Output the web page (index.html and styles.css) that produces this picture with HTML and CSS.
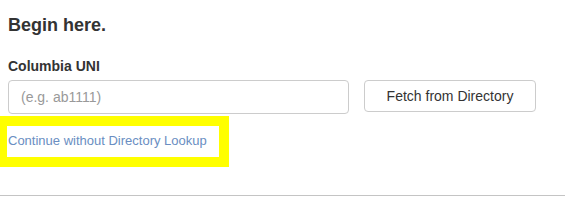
FILE: index.html
```html
<!DOCTYPE html>
<html lang="en">
  <head>
    <meta charset="UTF-8" />
    <meta name="viewport" content="width=device-width, initial-scale=1.0" />
    <title>Begin here</title>
    <link rel="stylesheet" href="styles.css">
  </head>
  <body>
    <div class="panel">
      <h3 class="title">Begin here.</h3>

      <label class="field-label" for="uni">Columbia UNI</label>
      <div class="lookup-row">
        <input type="text" id="uni" class="uni-input" placeholder="(e.g. ab1111)" />
        <button class="btn">Fetch from Directory</button>
      </div>

      <div class="skip-highlight">
        <a href="#" class="skip-link">Continue without Directory Lookup</a>
      </div>
    </div>
    <hr class="divider" />
  </body>
</html>
```

FILE: styles.css
```css
body {
  font-family: "Liberation Sans", Arial, sans-serif;
  margin: 0;
  color: #333;
  background-color: #fff;
}

.panel {
  padding-left: 8px;
}

.title {
  margin: 15px 0 0;
  font-size: 18px;
  line-height: 20px;
  font-weight: bold;
}

.field-label {
  display: block;
  margin-top: 21px;
  font-size: 14px;
  line-height: 20px;
  font-weight: bold;
}

.lookup-row {
  display: flex;
  align-items: flex-start;
  margin-top: 4px;
}

.uni-input {
  box-sizing: border-box;
  width: 341px;
  height: 34px;
  padding: 0 12px;
  border: 1px solid #ccc;
  border-radius: 4px;
  font-family: inherit;
  font-size: 14px;
  color: #555;
  outline: none;
}

.uni-input::placeholder {
  color: #999;
}

.btn {
  box-sizing: border-box;
  margin-left: 15px;
  width: 172px;
  height: 32px;
  border: 1px solid #ccc;
  border-radius: 4px;
  background-color: #fff;
  font-family: inherit;
  font-size: 14px;
  color: #333;
  cursor: pointer;
}

.skip-highlight {
  display: inline-block;
  margin: 2px 0 0 -8px;
  border: 10px solid #ffff00;
  border-left-width: 7px;
}

.skip-link {
  display: block;
  padding: 5px 12px 7px 1px;
  font-size: 13px;
  line-height: 19px;
  color: #6a8ec2;
  text-decoration: none;
}

.divider {
  margin: 28px 0 0;
  border: 0;
  border-top: 1px solid #c4c4c4;
}
```
